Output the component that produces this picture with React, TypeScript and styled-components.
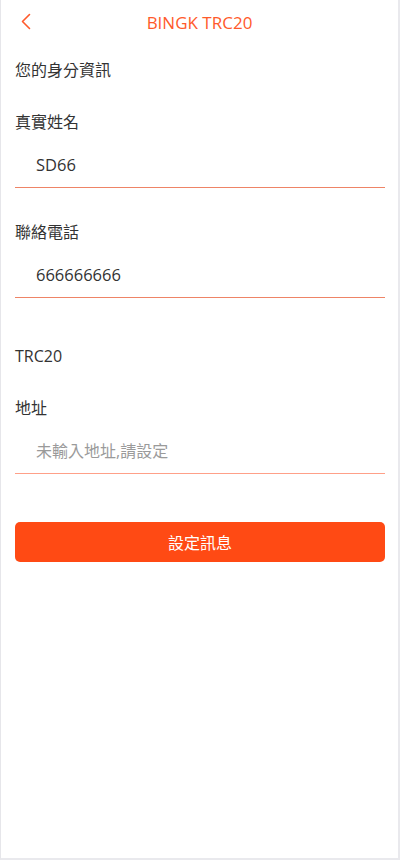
import React from 'react';
import styled, {createGlobalStyle} from 'styled-components';

const GlobalStyle = createGlobalStyle`
    html, body {
        margin: 0;
        padding: 0;
        background: #ffffff;
    }
    body {
        font-family: "Open Sans", "Noto Sans CJK TC", sans-serif;
        color: #333333;
    }
`;

const Page = styled.div`
    box-sizing: border-box;
    width: 400px;
    height: 860px;
    background: #ffffff;
    border-left: 1px solid #e6e6ea;
    border-right: 2px solid #e9e9ed;
    border-bottom: 2px solid #e9e9ed;
    display: flex;
    flex-direction: column;
`;

const Header = styled.header`
    position: relative;
    height: 44px;
    display: flex;
    align-items: center;
    justify-content: center;
`;

const BackButton = styled.button`
    position: absolute;
    left: 13px;
    top: 10px;
    width: 24px;
    height: 24px;
    padding: 0;
    border: none;
    background: none;
    display: flex;
    align-items: center;
    justify-content: center;
    cursor: pointer;
`;

const Title = styled.h1`
    margin: 0;
    font-size: 17px;
    font-weight: 400;
    color: #ff5a2b;
`;

const Body = styled.div`
    padding: 16px 13px 0 14px;
    display: flex;
    flex-direction: column;
`;

const SectionTitle = styled.div<{$gap: number}>`
    margin-top: ${({$gap}) => $gap}px;
    font-size: 16px;
    line-height: 20px;
    color: #333333;
`;

const Field = styled.div`
    display: flex;
    flex-direction: column;
`;

const Label = styled.label<{$gap: number}>`
    margin-top: ${({$gap}) => $gap}px;
    font-size: 16px;
    line-height: 20px;
    color: #333333;
`;

const Input = styled.input<{$line: string}>`
    box-sizing: border-box;
    margin-top: 11px;
    height: 45px;
    width: 100%;
    padding: 0 0 1px 21px;
    border: none;
    border-bottom: 1px solid ${({$line}) => $line};
    outline: none;
    background: transparent;
    font-family: "Open Sans", "Noto Sans CJK TC", sans-serif;
    font-size: 16.5px;
    color: #333333;

    &::placeholder {
        color: #9a9a9a;
        font-size: 16px;
    }
`;

const SubmitButton = styled.button`
    margin-top: 48px;
    height: 40px;
    width: 100%;
    border: none;
    border-radius: 5px;
    background: #ff4a14;
    color: #ffffff;
    font-family: "Open Sans", "Noto Sans CJK TC", sans-serif;
    font-size: 16px;
    cursor: pointer;
`;

const ChevronLeft = () => (
    <svg width="12" height="18" viewBox="0 0 12 18" fill="none">
        <path d="M9.5 1.5 L2.5 8.5 L9.5 15.5" stroke="#ff5a2b" strokeWidth="1.6" strokeLinecap="round" strokeLinejoin="round"/>
    </svg>
);

export default function App() {
    return (
        <>
            <GlobalStyle/>
            <Page>
                <Header>
                    <BackButton aria-label="back">
                        <ChevronLeft/>
                    </BackButton>
                    <Title>BINGK TRC20</Title>
                </Header>
                <Body>
                    <SectionTitle $gap={0}>您的身分資訊</SectionTitle>
                    <Field>
                        <Label $gap={32}>真實姓名</Label>
                        <Input $line="#ee8466" readOnly value="SD66"/>
                    </Field>
                    <Field>
                        <Label $gap={34}>聯絡電話</Label>
                        <Input $line="#ee8466" readOnly value="666666666"/>
                    </Field>
                    <SectionTitle $gap={48}>TRC20</SectionTitle>
                    <Field>
                        <Label $gap={32}>地址</Label>
                        <Input $line="#ffa088" placeholder="未輸入地址,請設定"/>
                    </Field>
                    <SubmitButton>設定訊息</SubmitButton>
                </Body>
            </Page>
        </>
    );
}
